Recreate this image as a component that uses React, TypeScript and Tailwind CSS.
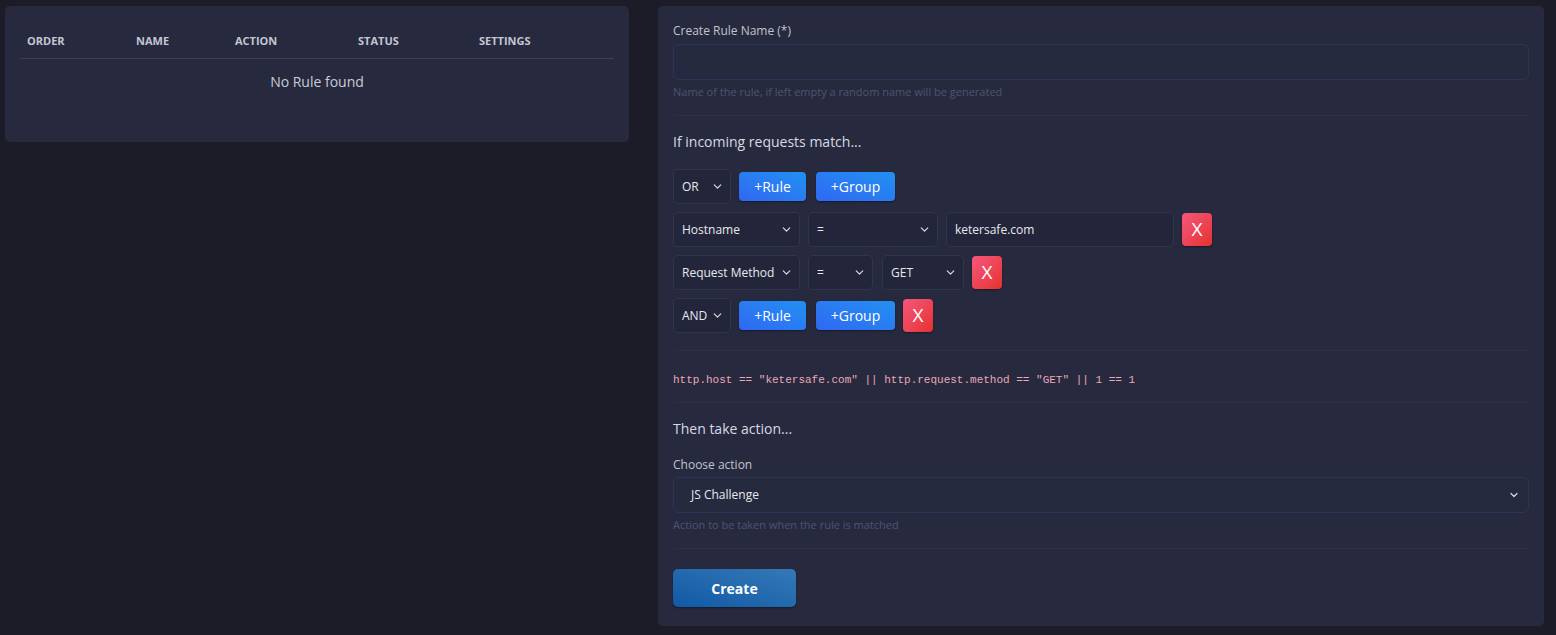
import React from 'react'
import { ChevronDown } from 'lucide-react'

const font = { fontFamily: '"Open Sans", "Noto Sans", sans-serif' }

const Select = ({ label, w }: { label: string; w: string }) => (
  <div className={`${w} h-[35px] flex items-center justify-between pl-[8px] pr-[6px] rounded-[5px] border border-[#31354c] bg-[#23263a] text-[12px] text-[#e7e8ef]`}>
    <span>{label}</span>
    <ChevronDown size={13} strokeWidth={2.2} className="text-[#d8dae3]" />
  </div>
)

const BlueBtn = ({ children, w }: { children: React.ReactNode; w: string }) => (
  <button className={`${w} h-[29px] rounded-[4px] bg-gradient-to-tr from-[#3067f2] to-[#2290f2] text-white text-[14px] shadow-[0_1px_2px_rgba(0,0,0,0.4)]`}>
    {children}
  </button>
)

const XBtn = () => (
  <button className="w-[30px] h-[33px] rounded-[4px] bg-gradient-to-br from-[#f5567c] to-[#e6302c] text-white text-[19px] shadow-[0_1px_2px_rgba(0,0,0,0.4)]">
    X
  </button>
)

const Sep = ({ className }: { className: string }) => (
  <div className={`border-t border-[#2d3045] ${className}`} />
)

export default function App() {
  return (
    <div style={font} className="min-h-[635px] bg-[#1c1c28] flex items-start gap-[29px] pl-[5px] pt-[6px]">
      {/* rules table */}
      <div className="w-[624px] h-[136px] rounded-[5px] bg-[#272a3e] px-[15px] pt-[26px]">
        <div className="flex items-center h-[27px] pb-[7px] border-b border-[#3b3f55] text-[11px] font-bold text-[#c3c6d3]">
          <span className="w-[116px] pl-[7px]">ORDER</span>
          <span className="w-[99px]">NAME</span>
          <span className="w-[123px]">ACTION</span>
          <span className="w-[121px]">STATUS</span>
          <span>SETTINGS</span>
        </div>
        <div className="text-center text-[14px] text-[#c9cbd6] mt-[12px]">No Rule found</div>
      </div>

      {/* create form */}
      <div className="w-[886px] rounded-[5px] bg-[#272a3e] px-[15px] pt-[16px] pb-[19px]">
        <div className="text-[12px] leading-[18px] text-[#c0c3d0]">Create Rule Name (*)</div>
        <div className="mt-[4px] h-[36px] rounded-[6px] border border-[#2d3459] bg-[#262a3f]" />
        <div className="mt-[5px] text-[11px] leading-[14px] text-[#4c5472]">Name of the rule, if left empty a random name will be generated</div>
        <Sep className="mt-[16px]" />

        <div className="mt-[16px] text-[14px] leading-[20px] text-[#d7d9e2]">If incoming requests match...</div>

        <div className="mt-[17px] flex flex-col gap-[8px]">
          <div className="flex items-center h-[35px]">
            <Select label="OR" w="w-[58px]" />
            <div className="ml-[8px]"><BlueBtn w="w-[67px]">+Rule</BlueBtn></div>
            <div className="ml-[10px]"><BlueBtn w="w-[79px]">+Group</BlueBtn></div>
          </div>
          <div className="flex items-center h-[35px]">
            <Select label="Hostname" w="w-[127px]" />
            <div className="ml-[8px]"><Select label="=" w="w-[130px]" /></div>
            <div className="ml-[8px] w-[228px] h-[35px] flex items-center px-[8px] rounded-[5px] border border-[#31354c] bg-[#23263a] text-[12px] text-[#e7e8ef]">ketersafe.com</div>
            <div className="ml-[8px]"><XBtn /></div>
          </div>
          <div className="flex items-center h-[35px]">
            <Select label="Request Method" w="w-[127px]" />
            <div className="ml-[8px]"><Select label="=" w="w-[65px]" /></div>
            <div className="ml-[9px]"><Select label="GET" w="w-[82px]" /></div>
            <div className="ml-[8px]"><XBtn /></div>
          </div>
          <div className="flex items-center h-[35px]">
            <Select label="AND" w="w-[58px]" />
            <div className="ml-[8px]"><BlueBtn w="w-[67px]">+Rule</BlueBtn></div>
            <div className="ml-[10px]"><BlueBtn w="w-[79px]">+Group</BlueBtn></div>
            <div className="ml-[8px]"><XBtn /></div>
          </div>
        </div>

        <Sep className="mt-[17px]" />
        <div className="mt-[21px] text-[11px] leading-[16px] text-[#eba8b6]" style={{ fontFamily: '"Liberation Mono", "DejaVu Sans Mono", monospace' }}>
          http.host == "ketersafe.com" || http.request.method == "GET" || 1 == 1
        </div>
        <Sep className="mt-[14px]" />

        <div className="mt-[16px] text-[14px] leading-[20px] text-[#d7d9e2]">Then take action...</div>
        <div className="mt-[17px] text-[12px] leading-[18px] text-[#c0c3d0]">Choose action</div>
        <div className="mt-[3px] h-[36px] flex items-center justify-between pl-[17px] pr-[8px] rounded-[6px] border border-[#2d3459] bg-[#262a3f] text-[12px] text-[#e7e8ef]">
          <span>JS Challenge</span>
          <ChevronDown size={12} strokeWidth={2.4} className="text-[#d8dae3]" />
        </div>
        <div className="mt-[5px] text-[11px] leading-[14px] text-[#4c5472]">Action to be taken when the rule is matched</div>
        <Sep className="mt-[16px]" />

        <button className="mt-[20px] w-[123px] h-[38px] rounded-[5px] bg-gradient-to-tr from-[#0f59a6] to-[#3479b6] text-white text-[14px] font-bold shadow-[0_1px_2px_rgba(0,0,0,0.4)]">
          Create
        </button>
      </div>
    </div>
  )
}
